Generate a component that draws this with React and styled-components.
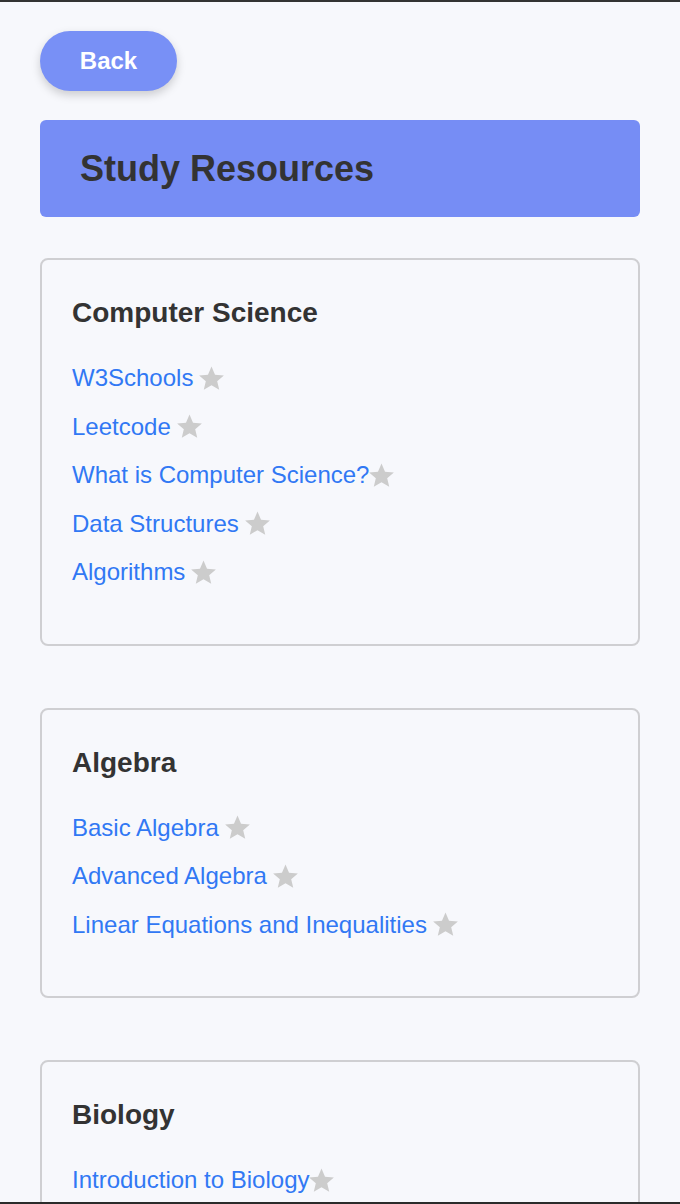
import React from 'react'
import styled, { createGlobalStyle } from 'styled-components'

const GlobalStyle = createGlobalStyle`
  html, body {
    margin: 0;
    padding: 0;
    background: #f7f8fc;
    font-family: "Liberation Sans", Arial, Helvetica, sans-serif;
  }
  body {
    border-top: 2px solid #333;
  }
  body::after {
    content: '';
    position: fixed;
    left: 0;
    right: 0;
    bottom: 0;
    height: 2px;
    background: #2b2b2b;
  }
`;

const resources = [
  {
    subject: 'Computer Science',
    links: [
      { label: 'W3Schools', spaced: true },
      { label: 'Leetcode', spaced: true },
      { label: 'What is Computer Science?', spaced: false },
      { label: 'Data Structures', spaced: true },
      { label: 'Algorithms', spaced: true },
    ],
  },
  {
    subject: 'Algebra',
    links: [
      { label: 'Basic Algebra', spaced: true },
      { label: 'Advanced Algebra', spaced: true },
      { label: 'Linear Equations and Inequalities', spaced: true },
    ],
  },
  {
    subject: 'Biology',
    links: [
      { label: 'Introduction to Biology', spaced: false },
      { label: 'Cell Biology', spaced: true },
    ],
  },
];

const Star = () => (
  <StarIcon viewBox="1 1 22 22" aria-hidden="true">
    <path d="M12 1.5l3.1 7.2 7.8.6-5.9 5.1 1.8 7.6L12 17.9l-6.8 4.1 1.8-7.6-5.9-5.1 7.8-.6z" />
  </StarIcon>
);

const App = () => {
  return (
    <Page>
      <GlobalStyle />
      <BackButton>Back</BackButton>

      <Banner>
        <h1>Study Resources</h1>
      </Banner>

      {resources.map((group) => (
        <Card key={group.subject}>
          <CardTitle>{group.subject}</CardTitle>
          <LinkList>
            {group.links.map((link) => (
              <LinkRow key={link.label}>
                <ResourceLink href="#">{link.label}</ResourceLink>
                <FavButton $spaced={link.spaced} aria-label="favorite">
                  <Star />
                </FavButton>
              </LinkRow>
            ))}
          </LinkList>
        </Card>
      ))}
    </Page>
  )
}

const Page = styled.main`
  padding: 29px 40px 40px;
  display: flex;
  flex-direction: column;
  align-items: flex-start;
`;

const BackButton = styled.button`
  width: 137px;
  height: 60px;
  border: none;
  border-radius: 30px;
  background: #7890f6;
  color: #fff;
  font-family: "Liberation Sans", Arial, sans-serif;
  font-weight: 700;
  font-size: 24px;
  box-shadow: 0 4px 10px rgba(0, 0, 0, 0.18);
  cursor: pointer;
`;

const Banner = styled.header`
  align-self: stretch;
  margin-top: 29px;
  padding: 28px 40px;
  background: #768df5;
  border-radius: 6px;

  h1 {
    margin: 0;
    font-size: 36px;
    line-height: 41px;
    font-weight: 700;
    color: #333;
  }
`;

const Card = styled.section`
  align-self: stretch;
  margin-top: 41px;
  padding: 32px 30px 37px;
  border: 2px solid #cfcfd2;
  border-radius: 8px;

  & + & {
    margin-top: 62px;
  }
`;

const CardTitle = styled.h3`
  margin: 0 0 30px;
  font-size: 28px;
  line-height: 42px;
  font-weight: 700;
  color: #333;
`;

const LinkList = styled.ul`
  list-style: none;
  margin: 0;
  padding: 0;
`;

const LinkRow = styled.li`
  display: flex;
  align-items: center;
  height: 28px;
  margin-bottom: 20.5px;
`;

const ResourceLink = styled.a`
  font-size: 24px;
  line-height: 28px;
  color: #3178f4;
  text-decoration: none;
`;

const FavButton = styled.button`
  display: flex;
  align-items: center;
  padding: 0;
  margin-left: ${({ $spaced }) => ($spaced ? '6px' : '0')};
  border: none;
  background: none;
  cursor: pointer;
`;

const StarIcon = styled.svg`
  width: 25px;
  height: 25px;
  fill: #cccccc;
`;

export default App
